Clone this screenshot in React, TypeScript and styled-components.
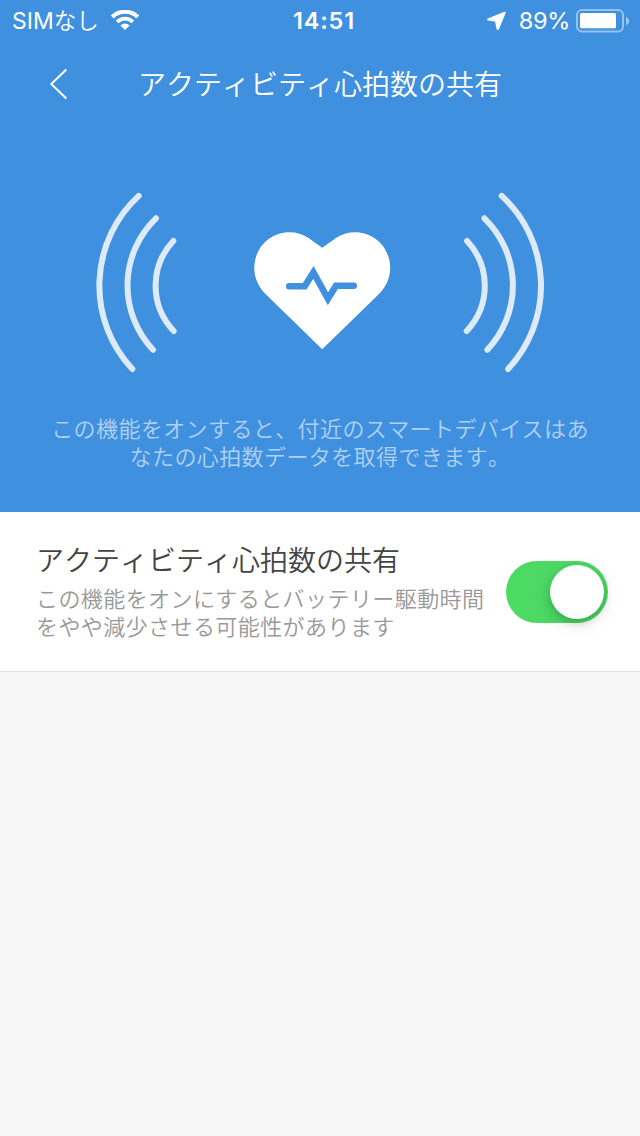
import React, { useState } from "react";
import styled, { createGlobalStyle } from "styled-components";

const GlobalStyle = createGlobalStyle`
  * { box-sizing: border-box; }
  body { margin: 0; background: #f7f7f7; }
`;

const jp = `"Noto Sans CJK JP", sans-serif`;

const Screen = styled.main`
  width: 640px;
  height: 1136px;
  background: #f7f7f7;
  font-family: ${jp};
  font-weight: 350;
  font-kerning: none;
`;

const Hero = styled.section`
  height: 512px;
  background: #4090e0;
  color: #fff;
`;

const StatusBar = styled.div`
  display: grid;
  grid-template-columns: 1fr auto 1fr;
  align-items: center;
  height: 40px;
  padding: 2px 11px 0 12px;
  font-family: Inter, ${jp};
  font-size: 24px;
  line-height: 38px;
`;

const Carrier = styled.div`
  display: flex;
  align-items: center;
  gap: 12px;
  font-size: 23px;
  font-weight: 375;
`;

const CarrierName = styled.span`
  height: 38px;
  line-height: 34px;
`;

const Kana = styled.span`
  font-family: ${jp};
  font-size: 22.5px;
  font-weight: 350;
`;

const Clock = styled.time`
  font-weight: 600;
  font-size: 23.5px;
  letter-spacing: 0.8px;
  padding-left: 7px;
`;

const Power = styled.div`
  display: flex;
  align-items: center;
  justify-content: flex-end;
  font-weight: 375;
  font-size: 23.5px;
`;

const Percent = styled.span`
  margin: 0 6px 0 13px;
  letter-spacing: -0.3px;
`;

const NavBar = styled.header`
  display: grid;
  grid-template-columns: 138px 1fr 138px;
  align-items: center;
  height: 88px;
`;

const BackButton = styled.button`
  display: flex;
  width: 40px;
  height: 44px;
  margin-left: 39px;
  padding: 0;
  border: 0;
  background: none;
  align-items: center;
  justify-content: center;
`;

const Title = styled.h1`
  margin: 0 0 2px;
  font-size: 28px;
  line-height: 40px;
  font-weight: 350;
  text-align: center;
  white-space: nowrap;
`;

const Artwork = styled.svg`
  display: block;
  margin: 52px auto 0;
`;

const Description = styled.p`
  margin: 33px 0 0;
  color: rgba(255, 255, 255, 0.6);
  font-size: 22px;
  letter-spacing: 0.4px;
  line-height: 28px;
  text-align: center;
  white-space: nowrap;
`;

const Setting = styled.section`
  display: flex;
  justify-content: space-between;
  height: 160px;
  padding: 27px 32px 0 36px;
  background: #fff;
  border-bottom: 1px solid #e0e0e0;
`;

const Label = styled.h2`
  margin: 0;
  color: #444;
  font-size: 28px;
  line-height: 40px;
  font-weight: 350;
`;

const Hint = styled.p`
  margin: 4px 0 0;
  color: #999;
  font-size: 22px;
  letter-spacing: 0.42px;
  line-height: 28px;
  white-space: nowrap;
`;

const Switch = styled.button<{ $on: boolean }>`
  display: flex;
  align-items: center;
  justify-content: ${(p) => (p.$on ? "flex-end" : "flex-start")};
  width: 102px;
  height: 62px;
  margin-top: 22px;
  padding: 4px;
  border: 0;
  border-radius: 31px;
  background: ${(p) => (p.$on ? "#4cd964" : "#ddd")};
`;

const Knob = styled.span`
  width: 54px;
  height: 54px;
  border-radius: 50%;
  background: #fff;
  box-shadow: 0 4px 8px rgba(0, 0, 0, 0.16), 0 4px 20px rgba(0, 0, 0, 0.1);
`;

const WifiIcon = () => (
  <svg width="28" height="22" viewBox="0 0 28 22" fill="none" stroke="#fff">
    <path d="M1.3 7A18 18 0 0 1 26.7 7" strokeWidth="4.2" />
    <path d="M6.1 11.9A11.2 11.2 0 0 1 21.9 11.9" strokeWidth="3.6" />
    <path d="M14 20.1L9.4 15.5A6.5 6.5 0 0 1 18.6 15.5Z" fill="#fff" stroke="none" />
  </svg>
);

const LocationIcon = () => (
  <svg width="20" height="20" viewBox="0 0 20 20" fill="#fff">
    <path
      d="M18.7 1.7L2.2 8.5L9.9 9.8L11.6 18.1L12.2 17.6Z"
      stroke="#fff"
      strokeWidth="2"
      strokeLinejoin="round"
    />
  </svg>
);

const BatteryIcon = () => (
  <svg width="53" height="24" viewBox="0 0 53 24">
    <rect x="1" y="1" width="46" height="21.5" rx="5" fill="none" stroke="#fff" strokeOpacity=".45" strokeWidth="2" />
    <rect x="4" y="4" width="36" height="15.3" rx="1.5" fill="#fff" />
    <path d="M50 8Q53 9 53 12T50 16Z" fill="#fff" fillOpacity=".5" />
  </svg>
);

const HeartBroadcast = () => (
  <Artwork width="460" height="200" viewBox="90 180 460 200" fill="none">
    <g stroke="#dceafa" strokeWidth="6" strokeLinecap="round">
      <path d="M138.7 195.9A122 122 0 0 0 132.3 369" />
      <path d="M156 218.3A93.5 93.5 0 0 0 153 349.7" />
      <path d="M173.3 241A65.5 65.5 0 0 0 173.7 331" />
      <path d="M501.7 195.9A122 122 0 0 1 508.1 369" />
      <path d="M484.4 218.3A93.5 93.5 0 0 1 487.4 349.7" />
      <path d="M467.1 241A65.5 65.5 0 0 1 466.7 331" />
    </g>
    <path
      fill="#fff"
      d="M322.2 349.2L264.5 293C258.5 286.5 254.3 278 254.3 268C254.3 248 270 232.3 289.5 232.3C296.5 232.3 303 234.3 308.5 238L322.2 247.7L336 238C341.5 234.3 348 232.3 355 232.3C374.5 232.3 390.2 248 390.2 268C390.2 278 386 286.5 380 293Z"
    />
    <path
      d="M289.3 286.2H304.7L313.4 272.5L328 298.8L336 285.7H353.7"
      stroke="#4090e0"
      strokeWidth="6.6"
      strokeLinecap="round"
      strokeMiterlimit="10"
    />
  </Artwork>
);

export default function App() {
  const [on, setOn] = useState(true);
  return (
    <>
      <GlobalStyle />
      <Screen lang="ja">
        <Hero>
          <StatusBar>
            <Carrier>
              <CarrierName>SIM<Kana>なし</Kana></CarrierName>
              <WifiIcon />
            </Carrier>
            <Clock>14:51</Clock>
            <Power>
              <LocationIcon />
              <Percent>89%</Percent>
              <BatteryIcon />
            </Power>
          </StatusBar>
          <NavBar>
            <BackButton aria-label="戻る">
              <svg width="20" height="34" viewBox="0 0 20 34" fill="none" stroke="#fff" strokeWidth="2">
                <path d="M17.3 2.5L2.3 17L17.3 31.5" />
              </svg>
            </BackButton>
            <Title>アクティビティ心拍数の共有</Title>
          </NavBar>
          <HeartBroadcast />
          <Description>
            この機能をオンすると、付近のスマートデバイスはあ
            <br />
            なたの心拍数データを取得できます。
          </Description>
        </Hero>
        <Setting>
          <div>
            <Label>アクティビティ心拍数の共有</Label>
            <Hint>
              この機能をオンにするとバッテリー駆動時間
              <br />
              をやや減少させる可能性があります
            </Hint>
          </div>
          <Switch $on={on} role="switch" aria-checked={on} onClick={() => setOn(!on)}>
            <Knob />
          </Switch>
        </Setting>
      </Screen>
    </>
  );
}
